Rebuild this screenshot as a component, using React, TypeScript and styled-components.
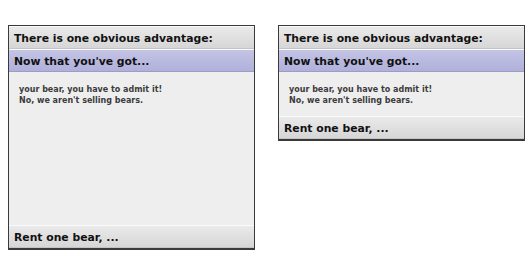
import styled, { createGlobalStyle } from "styled-components";

const GlobalStyle = createGlobalStyle`
  body {
    margin: 0;
    background: #ffffff;
    font-family: "DejaVu Sans", Verdana, sans-serif;
  }
`;

const Page = styled.div`
  display: flex;
  align-items: flex-start;
  gap: 23px;
  padding: 25px 0 0 8px;
`;

const Panel = styled.div<{ $height?: number }>`
  width: 245px;
  height: ${(props) => (props.$height ? `${props.$height}px` : "auto")};
  display: flex;
  flex-direction: column;
  border: 1px solid #3a3a3a;
  border-bottom-width: 2px;
  background: #eeeeee;
`;

const Header = styled.div<{ $active?: boolean }>`
  box-sizing: border-box;
  height: 23px;
  display: flex;
  align-items: center;
  padding: 1px 5px 0;
  font-size: 10.8px;
  font-weight: bold;
  color: #111;
  border-top: 1px solid #fafafa;
  border-bottom: 1px solid ${(props) => (props.$active ? "#9c9cc6" : "#c4c4c4")};
  background: ${(props) =>
    props.$active
      ? "linear-gradient(#c4c4e6, #b0b0da)"
      : "linear-gradient(#eaeaea, #d6d6d6)"};
`;

const Body = styled.div<{ $grow?: boolean }>`
  flex: ${(props) => (props.$grow ? 1 : "none")};
  padding: 12px 10px 10px;
  font-size: 8px;
  font-weight: bold;
  line-height: 11px;
  color: #3c3c3c;
  background: #eeeeee;
`;

const Line = styled.div``;

const Accordion = ({ height }: { height?: number }) => (
  <Panel $height={height}>
    <Header>There is one obvious advantage:</Header>
    <Header $active>Now that you've got...</Header>
    <Body $grow={!!height}>
      <Line>your bear, you have to admit it!</Line>
      <Line>No, we aren't selling bears.</Line>
    </Body>
    <Header>Rent one bear, ...</Header>
  </Panel>
);

const App = () => (
  <>
    <GlobalStyle />
    <Page>
      <Accordion height={222} />
      <Accordion />
    </Page>
  </>
);

export default App;
